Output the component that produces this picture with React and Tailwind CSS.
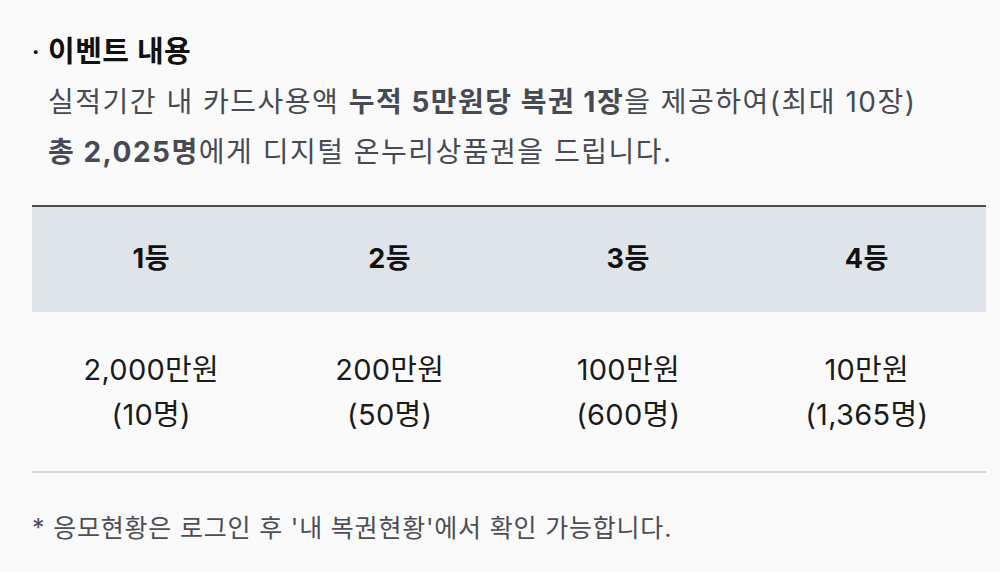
export default function App() {
  const prizes = [
    { rank: "1등", amount: "2,000만원", count: "(10명)" },
    { rank: "2등", amount: "200만원", count: "(50명)" },
    { rank: "3등", amount: "100만원", count: "(600명)" },
    { rank: "4등", amount: "10만원", count: "(1,365명)" },
  ];

  return (
    <main
      className="w-[1000px] h-[572px] bg-[#fafafa] pl-8 pr-[14px] pt-[35px] overflow-hidden"
      style={{ fontFamily: '"Inter", "Noto Sans CJK KR", sans-serif' }}
    >
      {/* 이벤트 내용 */}
      <h3 className="flex items-center text-[29px] leading-[34px] font-bold text-[#111] tracking-[0.5px]">
        <span className="w-[16px] text-[22px]">·</span>
        이벤트 내용
      </h3>
      <div className="pl-4 mt-[8px] text-[28px] leading-[50px] text-[#474a52] tracking-[1.5px]">
        <p>
          실적기간 내 카드사용액 <b className="font-bold">누적 5만원당 복권 1장</b>을 제공하여(최대 10장)
        </p>
        <p>
          <b className="font-bold">총 2,025명</b>에게 디지털 온누리상품권을 드립니다.
        </p>
      </div>

      {/* 당첨 테이블 */}
      <div className="mt-[28px] border-t-2 border-[#4b4d55]">
        <div className="grid grid-cols-4 bg-[#dfe3ea] h-[105px] items-center">
          {prizes.map((p) => (
            <div key={p.rank} className="text-center text-[27px] font-bold text-[#111] tracking-[0.5px]">
              {p.rank}
            </div>
          ))}
        </div>
        <div className="grid grid-cols-4 h-[161px] items-center border-b-2 border-[#d5d8df]">
          {prizes.map((p) => (
            <div key={p.rank} className="text-center text-[29px] leading-[45px] text-[#1b1b1b] tracking-[0.3px]">
              <div>{p.amount}</div>
              <div>{p.count}</div>
            </div>
          ))}
        </div>
      </div>

      <p className="mt-[37px] text-[25px] text-[#4b4e56] tracking-[0.8px]">
        * 응모현황은 로그인 후 '내 복권현황'에서 확인 가능합니다.
      </p>
    </main>
  );
}
